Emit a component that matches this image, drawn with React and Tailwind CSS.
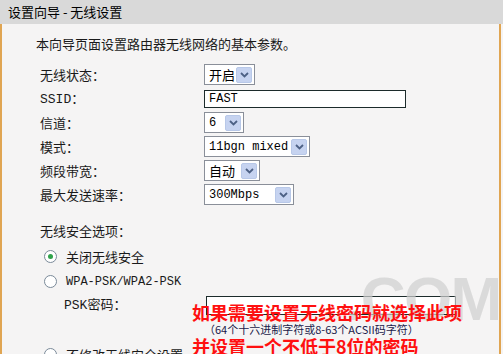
const CJK = "font-['Noto_Sans_CJK_SC','Liberation_Sans',sans-serif]";
const MONO = "font-['Liberation_Mono','Noto_Sans_CJK_SC',monospace]";

function Arrow() {
  return (
    <span className="flex h-[16px] w-[16px] shrink-0 items-center justify-center rounded-[2px] border border-[#b8c8e8] bg-[#c6d3f0]">
      <svg width="9" height="6" viewBox="0 0 9 6">
        <path d="M1 1 L4.5 4.5 L8 1" fill="none" stroke="#4d6185" strokeWidth="1.8" />
      </svg>
    </span>
  );
}

function Select({ value, width, latin }) {
  return (
    <div
      className={`flex h-[21px] items-center justify-between whitespace-nowrap border border-[#8a8f99] bg-white pl-[4px] pr-[2px] text-black ${width} ${latin ? `text-[12px] ${MONO}` : `text-[13px] ${CJK}`}`}
    >
      <span>{value}</span>
      <Arrow />
    </div>
  );
}

function Row({ label, children }) {
  return (
    <div className="flex h-[24px] items-center">
      <div className={`w-[164px] text-[13px] text-[#1a1a1a] ${CJK}`}>{label}</div>
      {children}
    </div>
  );
}

function Radio({ checked }) {
  return (
    <span className="flex h-[13px] w-[13px] items-center justify-center rounded-full border border-[#7a8a99] bg-white">
      {checked && <span className="h-[5px] w-[5px] rounded-full bg-[#2fa24a]" />}
    </span>
  );
}

export default function App() {
  return (
    <div className="relative h-[354px] w-[503px] overflow-hidden bg-[#f5f4f4]">
      <div className={`flex h-[24px] items-center bg-[#d9d9d9] pl-[8px] text-[13px] text-black ${CJK}`}>
        设置向导 - 无线设置
      </div>
      <div className="mr-[2px] h-[330px] border-l-2 border-r-2 border-[#e0a552]">
        <div className={`pl-[34px] pt-[10px] text-[13px] text-[#1a1a1a] ${CJK}`}>
          本向导页面设置路由器无线网络的基本参数。
        </div>
        <div className="flex flex-col pl-[38px] pt-[9px]">
          <Row label="无线状态：">
            <Select value="开启" width="w-[51px]" />
          </Row>
          <Row label={<span><span className={MONO}>SSID</span>：</span>}>
            <div className={`flex h-[18px] w-[202px] items-center border border-[#1c2b2b] bg-white pl-[4px] text-[12px] text-black ${MONO}`}>
              FAST
            </div>
          </Row>
          <Row label="信道：">
            <Select value="6" width="w-[40px]" latin />
          </Row>
          <Row label="模式：">
            <Select value="11bgn mixed" width="w-[106px]" latin />
          </Row>
          <Row label="频段带宽：">
            <Select value="自动" width="w-[56px]" />
          </Row>
          <Row label="最大发送速率：">
            <Select value="300Mbps" width="w-[90px]" latin />
          </Row>
          <div className={`mt-[14px] text-[13px] text-[#1a1a1a] ${CJK}`}>无线安全选项：</div>
          <div className="mt-[7px] flex items-center gap-[9px] pl-[4px]">
            <Radio checked />
            <span className={`text-[13px] text-[#1a1a1a] ${CJK}`}>关闭无线安全</span>
          </div>
          <div className="mt-[6px] flex items-center gap-[9px] pl-[4px]">
            <Radio />
            <span className={`text-[12px] text-[#1a1a1a] ${MONO}`}>WPA-PSK/WPA2-PSK</span>
          </div>
          <div className="mt-[3px] flex items-center pl-[24px]">
            <span className={`w-[142px] text-[13px] text-[#1a1a1a] ${CJK}`}>
              <span className={MONO}>PSK</span>密码：
            </span>
            <div className="mt-[2px] h-[19px] w-[250px] border border-[#1c2b2b] bg-white" />
          </div>
          <div className="mt-[30px] flex items-center gap-[9px] pl-[4px]">
            <Radio />
            <span className={`text-[13px] text-[#1a1a1a] ${CJK}`}>不修改无线安全设置</span>
          </div>
        </div>
      </div>
      <div className="absolute left-[345px] top-[268px] font-['Liberation_Sans',sans-serif] text-[62px] font-bold leading-none tracking-tight text-[#d0d0d0] opacity-70">
        .COM
      </div>
      <div className={`absolute left-[192px] top-[302px] flex flex-col ${CJK}`}>
        <div className="text-[18px] font-bold leading-[20px] text-[#ff1010]">如果需要设置无线密码就选择此项</div>
        <div className="pl-[12px] text-[11px] leading-[14px] text-[#1a1a4a]">（64个十六进制字符或8-63个ACSII码字符）</div>
        <div className="text-[18px] font-bold leading-[20px] text-[#ff1010]">并设置一个不低于8位的密码</div>
      </div>
    </div>
  );
}
